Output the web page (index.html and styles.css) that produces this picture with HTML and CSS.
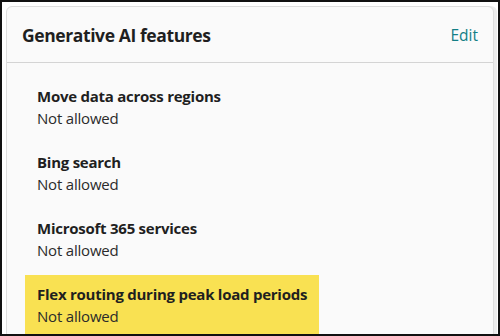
FILE: index.html
```html
<!DOCTYPE html>
<html lang="en">
<head>
<meta charset="utf-8">
<link rel="stylesheet" href="styles.css">
</head>
<body>
<div class="frame">
  <section class="card">
    <header class="card-header">
      <h2 class="card-title">Generative AI features</h2>
      <a class="edit-link" href="#">Edit</a>
    </header>
    <div class="card-body">
      <div class="item">
        <div class="item-title">Move data across regions</div>
        <div class="item-value">Not allowed</div>
      </div>
      <div class="item">
        <div class="item-title">Bing search</div>
        <div class="item-value">Not allowed</div>
      </div>
      <div class="item">
        <div class="item-title">Microsoft 365 services</div>
        <div class="item-value">Not allowed</div>
      </div>
      <div class="item item-highlight">
        <div class="item-title">Flex routing during peak load periods</div>
        <div class="item-value">Not allowed</div>
      </div>
    </div>
  </section>
</div>
</body>
</html>
```

FILE: styles.css
```css
* { box-sizing: border-box; }
html, body { margin: 0; padding: 0; }
body {
  font-family: "Open Sans", "Noto Sans", sans-serif;
  color: #242424;
  background: #ffffff;
}
.frame {
  width: 500px;
  height: 336px;
  border: 2px solid #111;
  padding: 4px 2px 0 4px;
  overflow: hidden;
  background: #ffffff;
}
.card {
  width: 488px;
  height: 400px;
  background: #fafafa;
  border: 1px solid #dedede;
  border-radius: 6px;
  box-shadow: 3px 0 0 #ececec;
}
.card-header {
  height: 56px;
  display: flex;
  align-items: center;
  justify-content: space-between;
  padding: 0 15px 0 15px;
  border-bottom: 1px solid #d4d4d4;
}
.card-title {
  margin: 0;
  font-size: 17.5px;
  font-weight: 700;
  letter-spacing: -0.4px;
  color: #1f1f1f;
}
.edit-link {
  font-size: 15.5px;
  color: #137f86;
  text-decoration: none;
}
.card-body {
  display: flex;
  flex-direction: column;
  align-items: flex-start;
  gap: 6px;
  padding: 14px 18px;
}
.item {
  padding: 8px 12px;
}
.item-title {
  font-size: 15px;
  font-weight: 700;
  line-height: 22px;
  letter-spacing: -0.25px;
  color: #1f1f1f;
}
.item-value {
  font-size: 15px;
  line-height: 22px;
  letter-spacing: -0.2px;
  color: #2b2b2b;
}
.item-highlight {
  background: #f9e152;
}
```
